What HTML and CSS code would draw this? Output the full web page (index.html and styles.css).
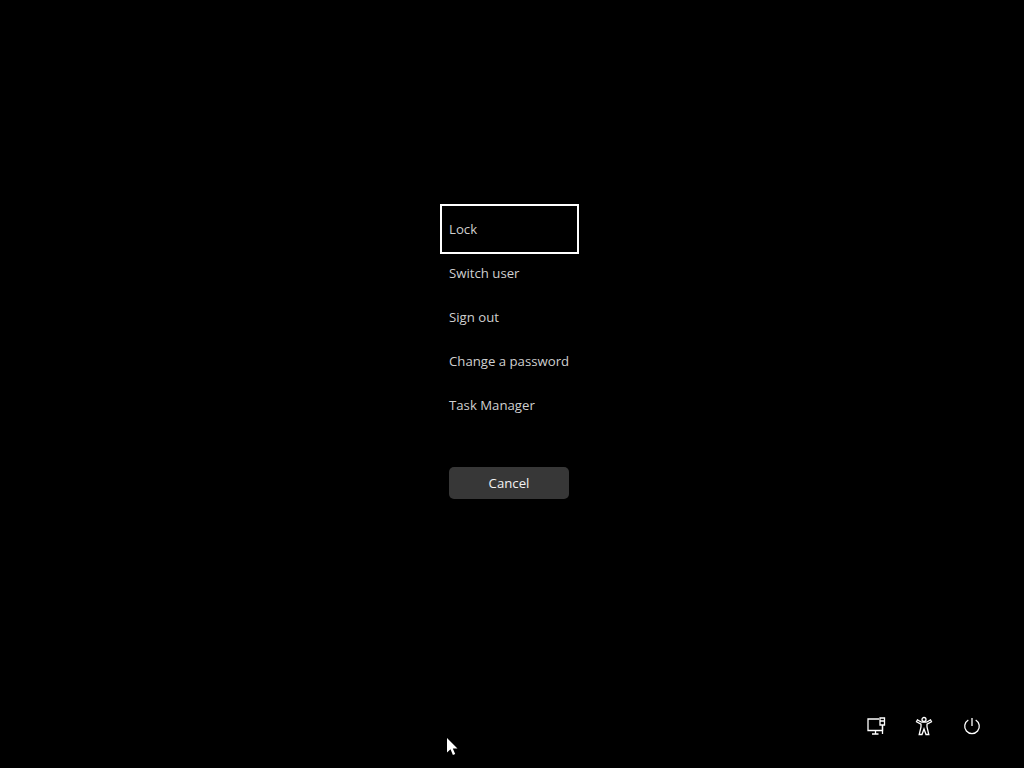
FILE: index.html
```html
<!DOCTYPE html>
<html lang="en">
<head>
    <meta charset="UTF-8">
    <title>Security options</title>
    <link rel="stylesheet" href="styles.css">
</head>
<body>
    <main class="screen">
        <div class="options">
            <ul class="menu">
                <li class="menu-item selected">Lock</li>
                <li class="menu-item">Switch user</li>
                <li class="menu-item">Sign out</li>
                <li class="menu-item">Change a password</li>
                <li class="menu-item">Task Manager</li>
            </ul>
            <button class="cancel">Cancel</button>
        </div>

        <div class="tray">
            <svg class="tray-icon" viewBox="0 0 20 20" aria-label="Network">
                <path d="M13 3H2v11.500h14.500V9.500M6 18h6.500M9.500 14.500V18"/>
                <path d="M14 2h4.500v7H14zM14 5h4.500M16.500 9v9"/>
            </svg>
            <svg class="tray-icon" viewBox="0 0 20 20" aria-label="Accessibility">
                <circle cx="10" cy="3.500" r="2"/>
                <path d="M3.500 3.800l-1 2L7 8.200v2.800L5.200 18.500H8l2-5.500 2 5.500h2.800L13 11V8.200l4.500-2.400-1-2c-2 1.200-3.500 2.400-4.500 2.400H8c-1 0-2.500-1.200-4.500-2.400z"/>
            </svg>
            <svg class="tray-icon" viewBox="0 0 20 20" aria-label="Power">
                <path d="M10 2v8M6.300 4a7.300 7.300 0 1 0 7.400 0"/>
            </svg>
        </div>

        <svg class="pointer" viewBox="0 0 12 20">
            <path d="M1 1v14.500l3.500-3.200 2.400 5.700 2.300-1-2.400-5.500h4.700z"/>
        </svg>
    </main>
</body>
</html>
```

FILE: styles.css
```css
* {
    box-sizing: border-box;
    margin: 0;
    padding: 0;
}

body {
    background: #000;
    font-family: "Open Sans", sans-serif;
    color: #cfcfcf;
}

.screen {
    position: relative;
    display: flex;
    flex-direction: column;
    justify-content: space-between;
    height: 768px;
    padding: 207px 42px 32px 443px;
}

.options {
    display: flex;
    flex-direction: column;
    width: 133px;
}

.menu {
    list-style: none;
}

.menu-item {
    height: 44px;
    padding-left: 6px;
    font-size: 13.200px;
    line-height: 44px;
    white-space: nowrap;
}

.menu-item.selected {
    outline: 2px solid #fff;
    outline-offset: 1px;
}

.cancel {
    width: 120px;
    height: 32px;
    margin: 40px 0 0 6px;
    background: #373737;
    border: none;
    border-radius: 5px;
    color: #f2f2f2;
    font-family: inherit;
    font-size: 13.200px;
}

.tray {
    display: flex;
    justify-content: flex-end;
    gap: 28px;
}

.tray-icon {
    width: 20px;
    height: 20px;
    fill: none;
    stroke: #fff;
    stroke-width: 1.300;
}

.pointer {
    position: absolute;
    left: 446px;
    top: 737px;
    width: 12px;
    height: 20px;
    fill: #fff;
}
```
